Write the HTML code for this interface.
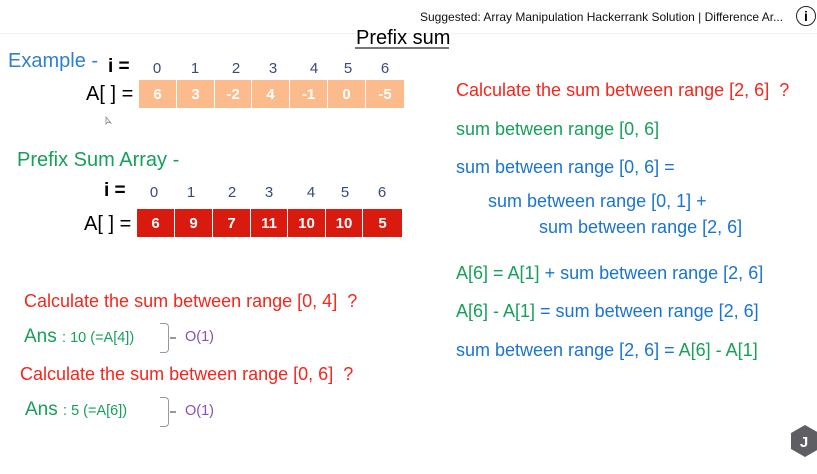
<!DOCTYPE html>
<html><head><meta charset="utf-8"><style>
body{margin:0;width:817px;height:474px;overflow:hidden;background:#fff;font-family:"Liberation Sans","DejaVu Sans",sans-serif;position:relative}
.t{position:absolute;white-space:nowrap;line-height:1}
.r{color:#f5261b}.g{color:#16a05a}.b{color:#1a74d1}.p{color:#8a4fb5}
.cells{position:absolute;display:flex;height:28px}
.cells div{height:28px;color:#fff;font-weight:bold;font-size:15px;display:flex;align-items:center;justify-content:center;border-right:1.5px solid #fff;box-sizing:border-box}
.idx{color:#3a4a7a;font-size:15px;position:absolute;transform:translateX(-50%)}
.brace{position:absolute;width:8px;border:1.5px solid #999;border-left:none;border-radius:0 4px 4px 0}
</style></head><body>
<div style="position:absolute;left:0;top:0;width:817px;height:33px;background:#fff;border-bottom:1px solid #f2f2f2"></div>
<div class="t" style="left:420px;top:11px;font-size:12px;color:#111">Suggested: Array Manipulation Hackerrank Solution | Difference Ar...</div>
<div style="position:absolute;left:796px;top:6px;width:20px;height:20px;border:1.5px solid #222;border-radius:50%;box-sizing:border-box;font-size:14px;text-align:center;line-height:18px;font-weight:bold">i</div>

<div class="t" style="left:356px;top:28px;font-size:20px">Prefix sum</div>
<div style="position:absolute;left:355px;top:47px;width:94px;height:1.5px;background:#777"></div>

<div class="t" style="left:8px;top:51px;font-size:20px;color:#2f7fd0">Example -</div>
<div class="t" style="left:108px;top:57px;font-size:19px;font-weight:bold">i =</div>
<div class="idx" style="left:157px;top:60px">0</div><div class="idx" style="left:195px;top:60px">1</div><div class="idx" style="left:236px;top:60px">2</div><div class="idx" style="left:273px;top:60px">3</div><div class="idx" style="left:314px;top:60px">4</div><div class="idx" style="left:348px;top:60px">5</div><div class="idx" style="left:385px;top:60px">6</div>
<div class="t" style="left:86px;top:84px;font-size:20px">A[ ] =</div>
<div class="cells" style="left:139px;top:80px;background:#fbbb8c">
<div style="width:38px">6</div><div style="width:38px">3</div><div style="width:37px">-2</div><div style="width:38px">4</div><div style="width:38px">-1</div><div style="width:38px">0</div><div style="width:38px;border:none">-5</div></div>
<svg style="position:absolute;left:105px;top:116px" width="8" height="10"><path d="M1 1 L1 8 L3 6 L6 7 Z" fill="#fff" stroke="#888" stroke-width="0.8"/></svg>

<div class="t g" style="left:17px;top:150px;font-size:20px">Prefix Sum Array -</div>
<div class="t" style="left:104px;top:181px;font-size:19px;font-weight:bold">i =</div>
<div class="idx" style="left:154px;top:184px">0</div><div class="idx" style="left:191px;top:184px">1</div><div class="idx" style="left:232px;top:184px">2</div><div class="idx" style="left:269px;top:184px">3</div><div class="idx" style="left:311px;top:184px">4</div><div class="idx" style="left:345px;top:184px">5</div><div class="idx" style="left:382px;top:184px">6</div>
<div class="t" style="left:84px;top:214px;font-size:20px">A[ ] =</div>
<div class="cells" style="left:137px;top:209px;background:#d91a0e">
<div style="width:38px">6</div><div style="width:38px">9</div><div style="width:38px">7</div><div style="width:37px">11</div><div style="width:38px">10</div><div style="width:37px">10</div><div style="width:39px;border:none">5</div></div>

<div class="t r" style="left:24px;top:292px;font-size:18px">Calculate the sum between range [0, 4]&nbsp; ?</div>
<div class="t g" style="left:24px;top:327px;font-size:19px">Ans <span style="font-size:14.5px">: 10 (=A[4])</span></div>
<div class="brace" style="left:160px;top:323px;height:28px"></div>
<div style="position:absolute;left:170px;top:337px;width:6px;height:1.5px;background:#999"></div>
<div class="t p" style="left:185px;top:330px;font-size:14.5px">O(1)</div>
<div class="t r" style="left:20px;top:365px;font-size:18px">Calculate the sum between range [0, 6]&nbsp; ?</div>
<div class="t g" style="left:25px;top:400px;font-size:19px">Ans <span style="font-size:14.5px">: 5 (=A[6])</span></div>
<div class="brace" style="left:160px;top:397px;height:28px"></div>
<div style="position:absolute;left:170px;top:411px;width:6px;height:1.5px;background:#999"></div>
<div class="t p" style="left:185px;top:404px;font-size:14.5px">O(1)</div>

<div class="t r" style="left:456px;top:81px;font-size:18px">Calculate the sum between range [2, 6]&nbsp; ?</div>
<div class="t g" style="left:456px;top:120px;font-size:18px">sum between range [0, 6]</div>
<div class="t b" style="left:456px;top:158px;font-size:18px">sum between range [0, 6] =</div>
<div class="t b" style="left:488px;top:192px;font-size:18px">sum between range [0, 1] +</div>
<div class="t b" style="left:539px;top:218px;font-size:18px">sum between range [2, 6]</div>
<div class="t b" style="left:456px;top:264px;font-size:18px"><span class="g">A[6] = A[1]</span> + sum between range [2, 6]</div>
<div class="t b" style="left:456px;top:302px;font-size:18px"><span class="g">A[6] - A[1]</span> = sum between range [2, 6]</div>
<div class="t b" style="left:456px;top:341px;font-size:18px">sum between range [2, 6] = <span class="g">A[6] - A[1]</span></div>

<svg style="position:absolute;left:790px;top:424px" width="30" height="34"><polygon points="15,1 29,9 29,25 15,33 1,25 1,9" fill="#5f5f63"/><text x="14" y="23" fill="#fff" font-size="15" font-weight="bold" text-anchor="middle" font-family="Liberation Sans">J</text></svg>
</body></html>
